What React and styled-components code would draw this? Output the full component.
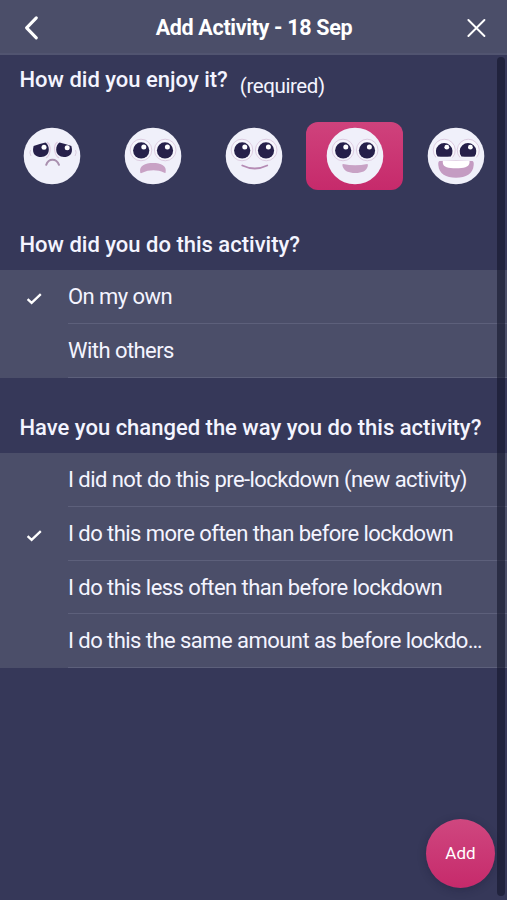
import React from 'react';
import { useState } from 'react';
import styled, { createGlobalStyle } from 'styled-components';

const GlobalStyle = createGlobalStyle`
  * {
    box-sizing: border-box;
  }
  body {
    margin: 0;
    background: #363859;
    font-family: Roboto, "Liberation Sans", sans-serif;
    color: #f4f4ff;
  }
`;

const companyOptions = ['On my own', 'With others'];

const changeOptions = [
  'I did not do this pre-lockdown (new activity)',
  'I do this more often than before lockdown',
  'I do this less often than before lockdown',
  'I do this the same amount as before lockdown',
];

const moods = ['awful', 'bad', 'okay', 'good', 'great'];

const RoundEyes = () => (
  <g>
    <circle cx="-12" cy="-6" r="10.8" fill="#f6f5fc" stroke="#d9c6dc" strokeWidth="0.9" />
    <circle cx="12.2" cy="-6" r="10.8" fill="#f6f5fc" stroke="#d9c6dc" strokeWidth="0.9" />
    <circle cx="-11.8" cy="-5.6" r="8.1" fill="#26204a" />
    <circle cx="12" cy="-5.6" r="8.1" fill="#26204a" />
    <circle cx="-9.2" cy="-9" r="2.5" fill="#fff" />
    <circle cx="14.4" cy="-9" r="2.5" fill="#fff" />
  </g>
);

const Face = ({ mood }) => (
  <FaceSvg viewBox="-29 -29 58 58" role="img" aria-label={mood}>
    <circle r="28.3" fill="#f0f0fa" />
    {mood === 'awful' && (
      <g>
        <path d="M-21.5 -6Q-23 -3.5 -21 0M23.5 -6Q25 -3.5 23 0" fill="none" stroke="#d9c9dd" strokeWidth="0.9" />
        <path d="M-5 -14Q-1 -11 -2 -5Q-2.5 0 -6 2M5.5 -14Q1.5 -11 2.8 -5Q3.5 0 7 2" fill="none" stroke="#dfc8df" strokeWidth="1.1" />
        <path d="M-18.4 -10Q-12 -12 -6.5 -13.4Q-3.2 -11 -3.2 -6.4C-3.2 -1.5 -6.5 1 -11 1S-20.8 -1.5 -18.4 -10Z" fill="#26204a" />
        <path d="M19.4 -10Q13 -12 7.5 -13.4Q4.2 -11 4.2 -6.4C4.2 -1.5 7.5 1 12 1S21.8 -1.5 19.4 -10Z" fill="#26204a" />
        <circle cx="-8" cy="-8.8" r="2.5" fill="#fff" />
        <circle cx="15.2" cy="-8.2" r="2.5" fill="#fff" />
        <path d="M-5.8 8.8Q-4 3.8 0.5 3.8Q5 3.8 7 8.8" fill="none" stroke="#a98fae" strokeWidth="2" strokeLinecap="round" />
      </g>
    )}
    {mood === 'bad' && (
      <g>
        <RoundEyes />
        <path d="M-12.8 16.5C-14 9.5 -8 7 0 7S14 9.5 12.6 16.5Q12.3 17.5 10.8 16.6C5 13.6 -4 13.5 -10.8 16.8Q-12.5 17.6 -12.8 16.5Z" fill="#c8a2c5" />
      </g>
    )}
    {mood === 'okay' && (
      <g>
        <RoundEyes />
        <path d="M-11.7 9.5Q0.8 15.5 13.2 9.5" fill="none" stroke="#b58bb4" strokeWidth="1.8" strokeLinecap="round" />
      </g>
    )}
    {mood === 'good' && (
      <g>
        <RoundEyes />
        <path d="M-12 8Q0.3 10.4 12.2 8Q13.2 8 12.8 10C11.5 15 7 17 0.3 17S-11 15 -12.5 10Q-13 8 -12 8Z" fill="#c8a2c5" />
      </g>
    )}
    {mood === 'great' && (
      <g>
        <path d="M-20 1.5A11 11 0 1 1 -3.5 1.5M20.5 1.5A11 11 0 1 0 4 1.5" fill="#f8f7fd" stroke="#d9c6dc" strokeWidth="0.9" />
        <path d="M-18.4 0.4A8.3 8.3 0 1 1 -5.2 0.4Q-12 1 -18.4 0.4Z" fill="#26204a" />
        <path d="M18.6 0.4A8.3 8.3 0 1 0 5.4 0.4Q12 1 18.6 0.4Z" fill="#26204a" />
        <circle cx="-9.2" cy="-8.8" r="2.4" fill="#fff" />
        <circle cx="14.4" cy="-8.8" r="2.4" fill="#fff" />
        <path d="M-16.5 5Q0 4 16.5 5Q18 5.5 17.7 9C17 18 10 21.8 0 21.8S-17 18 -17.7 9Q-18 5.5 -16.5 5Z" fill="#c49bc2" />
        <path d="M-13.2 4.8H13.5V7C12.5 11.5 8 12.2 0 12.2S-12.5 11.5 -13.2 7Z" fill="#fff" />
      </g>
    )}
  </FaceSvg>
);

const OptionList = ({ options, selected, onSelect }) => (
  <List>
    {options.map((option, index) => (
      <Option key={option} onClick={() => onSelect(index)}>
        <CheckCell>
          {selected === index && (
            <svg width="16" height="14" viewBox="0 0 16 14">
              <path d="M1.6 7.2L5.6 10.9L14.8 2.2" fill="none" stroke="#fff" strokeWidth="2.3" />
            </svg>
          )}
        </CheckCell>
        <OptionLabel>{option}</OptionLabel>
      </Option>
    ))}
  </List>
);

const App = () => {
  const [mood, setMood] = useState('good');
  const [company, setCompany] = useState(0);
  const [change, setChange] = useState(1);

  return (
    <Screen>
      <GlobalStyle />
      <Header>
        <IconBtn aria-label="Back">
          <svg width="16" height="26" viewBox="0 0 16 26">
            <path d="M13.3 3.8L3.6 13.8L13.3 23.8" fill="none" stroke="#fff" strokeWidth="3.1" strokeLinecap="round" strokeLinejoin="round" />
          </svg>
        </IconBtn>
        <Title>Add Activity - 18 Sep</Title>
        <IconBtn aria-label="Close">
          <svg width="20" height="20" viewBox="0 0 20 20">
            <path d="M2.4 3L18.4 19M18.4 3L2.4 19" fill="none" stroke="#fff" strokeWidth="1.9" strokeLinecap="round" />
          </svg>
        </IconBtn>
      </Header>
      <Question height="49px">
        How did you enjoy it?
        <Required>(required)</Required>
      </Question>
      <Moods>
        {moods.map(name => (
          <MoodBtn key={name} active={mood === name ? 1 : 0} onClick={() => setMood(name)}>
            <Face mood={name} />
          </MoodBtn>
        ))}
      </Moods>
      <Question height="51.3px">How did you do this activity?</Question>
      <OptionList options={companyOptions} selected={company} onSelect={setCompany} />
      <Question height="75.2px" top="24px">
        Have you changed the way you do this activity?
      </Question>
      <OptionList options={changeOptions} selected={change} onSelect={setChange} />
      <ScrollThumb />
      <AddBtn>Add</AddBtn>
    </Screen>
  );
};

const Screen = styled.div`
  position: relative;
  display: flex;
  flex-direction: column;
  width: 507px;
  height: 900px;
  overflow: hidden;
  background: #363859;
`;
const Header = styled.header`
  display: flex;
  align-items: center;
  justify-content: space-between;
  height: 55px;
  padding: 0 21px 0 23px;
  background: #4b4e69;
  border-bottom: 2px solid #515470;
`;
const IconBtn = styled.button`
  display: flex;
  align-items: center;
  justify-content: center;
  padding: 0;
  border: none;
  background: none;
  cursor: pointer;
`;
const Title = styled.h1`
  margin: 1px 0 0 3px;
  font-size: 21.5px;
  font-weight: 700;
  letter-spacing: -0.32px;
  color: #fff;
`;
const Question = styled.h2`
  display: flex;
  align-items: center;
  flex-shrink: 0;
  height: ${props => props.height};
  margin: 0;
  padding: ${props => props.top || '0'} 0 0 19.5px;
  font-size: 22px;
  font-weight: 500;
  white-space: nowrap;
`;
const Required = styled.span`
  margin: 12px 0 0 12px;
  font-size: 20.5px;
  font-weight: 400;
  letter-spacing: -0.4px;
`;
const Moods = styled.div`
  display: grid;
  grid-template-columns: repeat(5, 97px);
  column-gap: 4.1px;
  flex-shrink: 0;
  height: 115px;
  padding: 18px 0 0 3.2px;
`;
const MoodBtn = styled.button`
  display: flex;
  align-items: center;
  justify-content: center;
  height: 68px;
  padding: 0;
  border: none;
  border-radius: 12px;
  background: ${props =>
    props.active ? 'linear-gradient(#cf427c, #c62a6b)' : 'transparent'};
  cursor: pointer;
`;
const FaceSvg = styled.svg`
  width: 58px;
  height: 58px;
`;
const List = styled.div`
  flex-shrink: 0;
  background: #4b4e69;
`;
const Option = styled.div`
  display: flex;
  height: 53.8px;
  cursor: pointer;
`;
const CheckCell = styled.div`
  display: flex;
  align-items: center;
  width: 68px;
  padding: 4px 0 0 26px;
`;
const OptionLabel = styled.div`
  flex: 1;
  min-width: 0;
  padding-right: 20px;
  border-bottom: 1.5px solid #5d607b;
  font-size: 22px;
  letter-spacing: -0.55px;
  line-height: 53.4px;
  white-space: nowrap;
  overflow: hidden;
  text-overflow: ellipsis;
`;
const ScrollThumb = styled.div`
  position: absolute;
  top: 57px;
  right: 2px;
  width: 8px;
  height: 839px;
  border-radius: 4px;
  background: rgba(17, 19, 38, 0.55);
`;
const AddBtn = styled.button`
  position: absolute;
  right: 12px;
  bottom: 12px;
  width: 69px;
  height: 69px;
  padding: 0 0 1px;
  border: none;
  border-radius: 50%;
  background: linear-gradient(#cf477f, #c62a6b);
  box-shadow: 0 2px 8px rgba(20, 20, 45, 0.3);
  font-family: inherit;
  font-size: 17px;
  color: #fff;
  cursor: pointer;
`;

export default App;
